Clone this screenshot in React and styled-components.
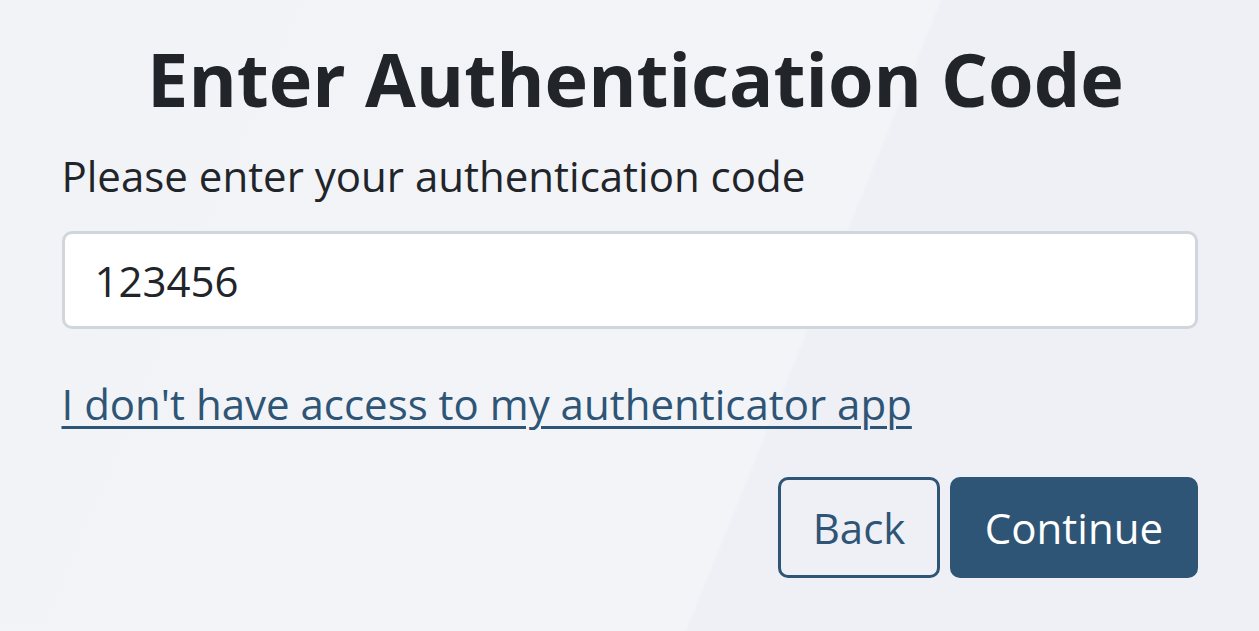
import styled, { createGlobalStyle } from 'styled-components';

const GlobalStyle = createGlobalStyle`
    html, body {
        margin: 0;
        padding: 0;
    }
    body {
        font-family: 'Open Sans', 'Noto Sans', sans-serif;
        color: #212529;
        background: linear-gradient(112deg, #f2f3f7 0%, #f3f4f8 62%, #eff0f5 62.3%, #eff0f5 100%);
        min-height: 631px;
    }
`

function App() {
    return (
        <>
            <GlobalStyle />
            <Page>
                <Title>Enter Authentication Code</Title>
                <Label htmlFor="code">Please enter your authentication code</Label>
                <CodeInput id="code" type="text" defaultValue="123456" />
                <HelpLink href="#">I don't have access to my authenticator app</HelpLink>
                <Actions>
                    <Button type="button" variant="outline">Back</Button>
                    <Button type="button">Continue</Button>
                </Actions>
            </Page>
        </>
    );
}

const Page = styled.main`
    display: flex;
    flex-direction: column;
    box-sizing: border-box;
    width: 1136px;
    margin: 0 auto;
    padding-top: 35px;
`
const Title = styled.h1`
    margin: 0 0 21px;
    padding-left: 12px;
    font-size: 73.7px;
    font-weight: 700;
    line-height: 1.2;
    text-align: center;
    color: #212529;
`
const Label = styled.label`
    font-size: 42px;
    line-height: 1.5;
    margin-bottom: 24px;
`
const CodeInput = styled.input`
    box-sizing: border-box;
    height: 98px;
    width: 100%;
    padding: 0 30px;
    border: 3px solid #d1d6dd;
    border-radius: 10px;
    background: #fff;
    font-family: inherit;
    font-size: 42px;
    color: #212529;
    outline: none;
`
const HelpLink = styled.a`
    align-self: flex-start;
    margin-top: 43px;
    font-size: 42px;
    line-height: 1.5;
    color: #2e5575;
    text-decoration: underline;
    text-decoration-thickness: 3px;
    text-underline-offset: 6px;
`
const Actions = styled.div`
    display: flex;
    justify-content: flex-end;
    gap: 10px;
    margin-top: 42px;
`
const Button = styled.button`
    box-sizing: border-box;
    height: 101px;
    padding: 0 ${({ variant }) => (variant === 'outline' ? '32px' : '31.5px')};
    border-radius: 10px;
    font-family: inherit;
    font-size: 42px;
    cursor: pointer;
    border: 3px solid #2e5575;
    background: ${({ variant }) => (variant === 'outline' ? 'transparent' : '#2e5575')};
    color: ${({ variant }) => (variant === 'outline' ? '#2e5575' : '#fff')};
`

export default App;
